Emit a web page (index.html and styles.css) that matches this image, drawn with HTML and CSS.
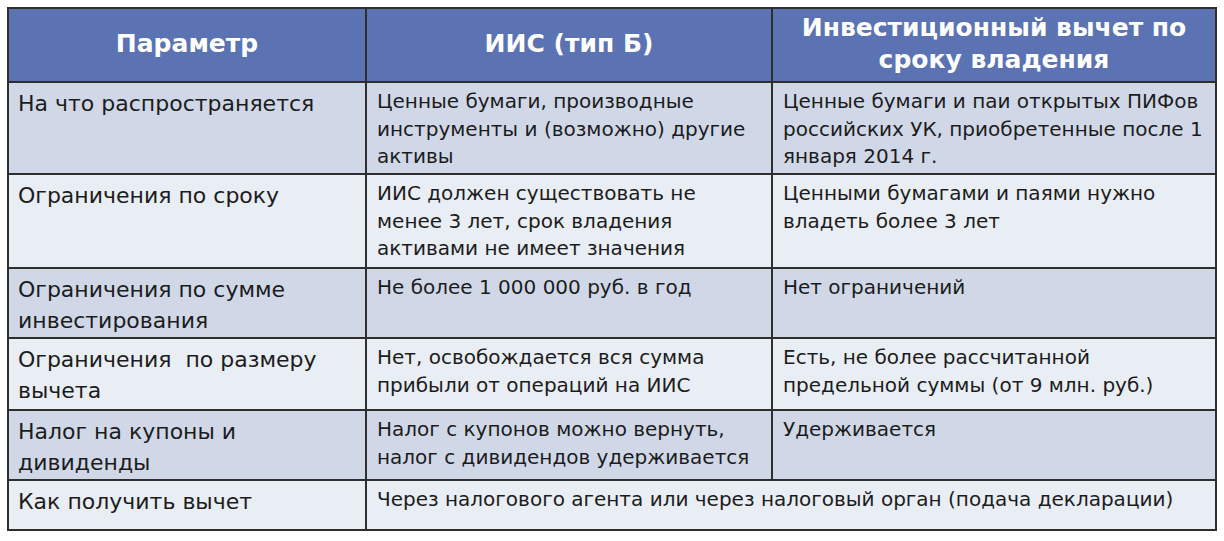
FILE: index.html
```html
<!DOCTYPE html>
<html lang="ru">
<head>
<meta charset="utf-8">
<link rel="stylesheet" href="styles.css">
</head>
<body>
<table class="cmp">
  <colgroup><col class="c1"><col class="c2"><col class="c3"></colgroup>
  <thead>
    <tr class="head">
      <th>Параметр</th>
      <th>ИИС (тип Б)</th>
      <th>Инвестиционный вычет по сроку владения</th>
    </tr>
  </thead>
  <tbody>
    <tr class="dark r1">
      <td class="p">На что распространяется</td>
      <td>Ценные бумаги, производные инструменты и (возможно) другие активы</td>
      <td>Ценные бумаги и паи открытых ПИФов российских УК, приобретенные после 1 января 2014 г.</td>
    </tr>
    <tr class="light r2">
      <td class="p">Ограничения по сроку</td>
      <td>ИИС должен существовать не менее 3 лет, срок владения активами не имеет значения</td>
      <td>Ценными бумагами и паями нужно владеть более 3 лет</td>
    </tr>
    <tr class="dark r3">
      <td class="p">Ограничения по сумме инвестирования</td>
      <td>Не более 1 000 000 руб. в год</td>
      <td>Нет ограничений</td>
    </tr>
    <tr class="light r4">
      <td class="p">Ограничения&nbsp; по размеру вычета</td>
      <td>Нет, освобождается вся сумма прибыли от операций на ИИС</td>
      <td>Есть, не более рассчитанной предельной суммы (от 9 млн. руб.)</td>
    </tr>
    <tr class="dark r5">
      <td class="p">Налог на купоны и дивиденды</td>
      <td>Налог с купонов можно вернуть, налог с дивидендов удерживается</td>
      <td>Удерживается</td>
    </tr>
    <tr class="light r6">
      <td class="p">Как получить вычет</td>
      <td colspan="2">Через налогового агента или через налоговый орган (подача декларации)</td>
    </tr>
  </tbody>
</table>
</body>
</html>
```
FILE: styles.css
```css
html, body {
  margin: 0;
  padding: 0;
  background: #ffffff;
}
body {
  padding: 7px 0 0 7px;
  font-family: "DejaVu Sans", Verdana, sans-serif;
  color: #1c1c1c;
}
.cmp {
  border-collapse: collapse;
  table-layout: fixed;
  width: 1208px;
  border: 2px solid #2e2e2e;
}
.c1 { width: 358px; }
.c2 { width: 406px; }
.c3 { width: 444px; }
.cmp th, .cmp td {
  border: 2px solid #2e2e2e;
  padding: 0;
}
.head th {
  background: #5b73b2;
  color: #ffffff;
  font-weight: bold;
  font-size: 25px;
  line-height: 32px;
  height: 70px;
  text-align: center;
  vertical-align: middle;
  padding: 0 8px 2px;
}
.cmp td {
  vertical-align: top;
  font-size: 20px;
  line-height: 27.5px;
  padding: 5px 10px 0 10px;
  text-align: left;
}
.cmp td.p {
  font-size: 22px;
  line-height: 31px;
  padding: 5px 8px 0 9px;
}
.dark td { background: #d0d8e8; }
.light td { background: #e9edf4; }
.r1 td { height: 85px; }
.r2 td { height: 87px; }
.r3 td { height: 63px; }
.r4 td { height: 65px; }
.r5 td { height: 63px; }
.r6 td { height: 43px; }
```
